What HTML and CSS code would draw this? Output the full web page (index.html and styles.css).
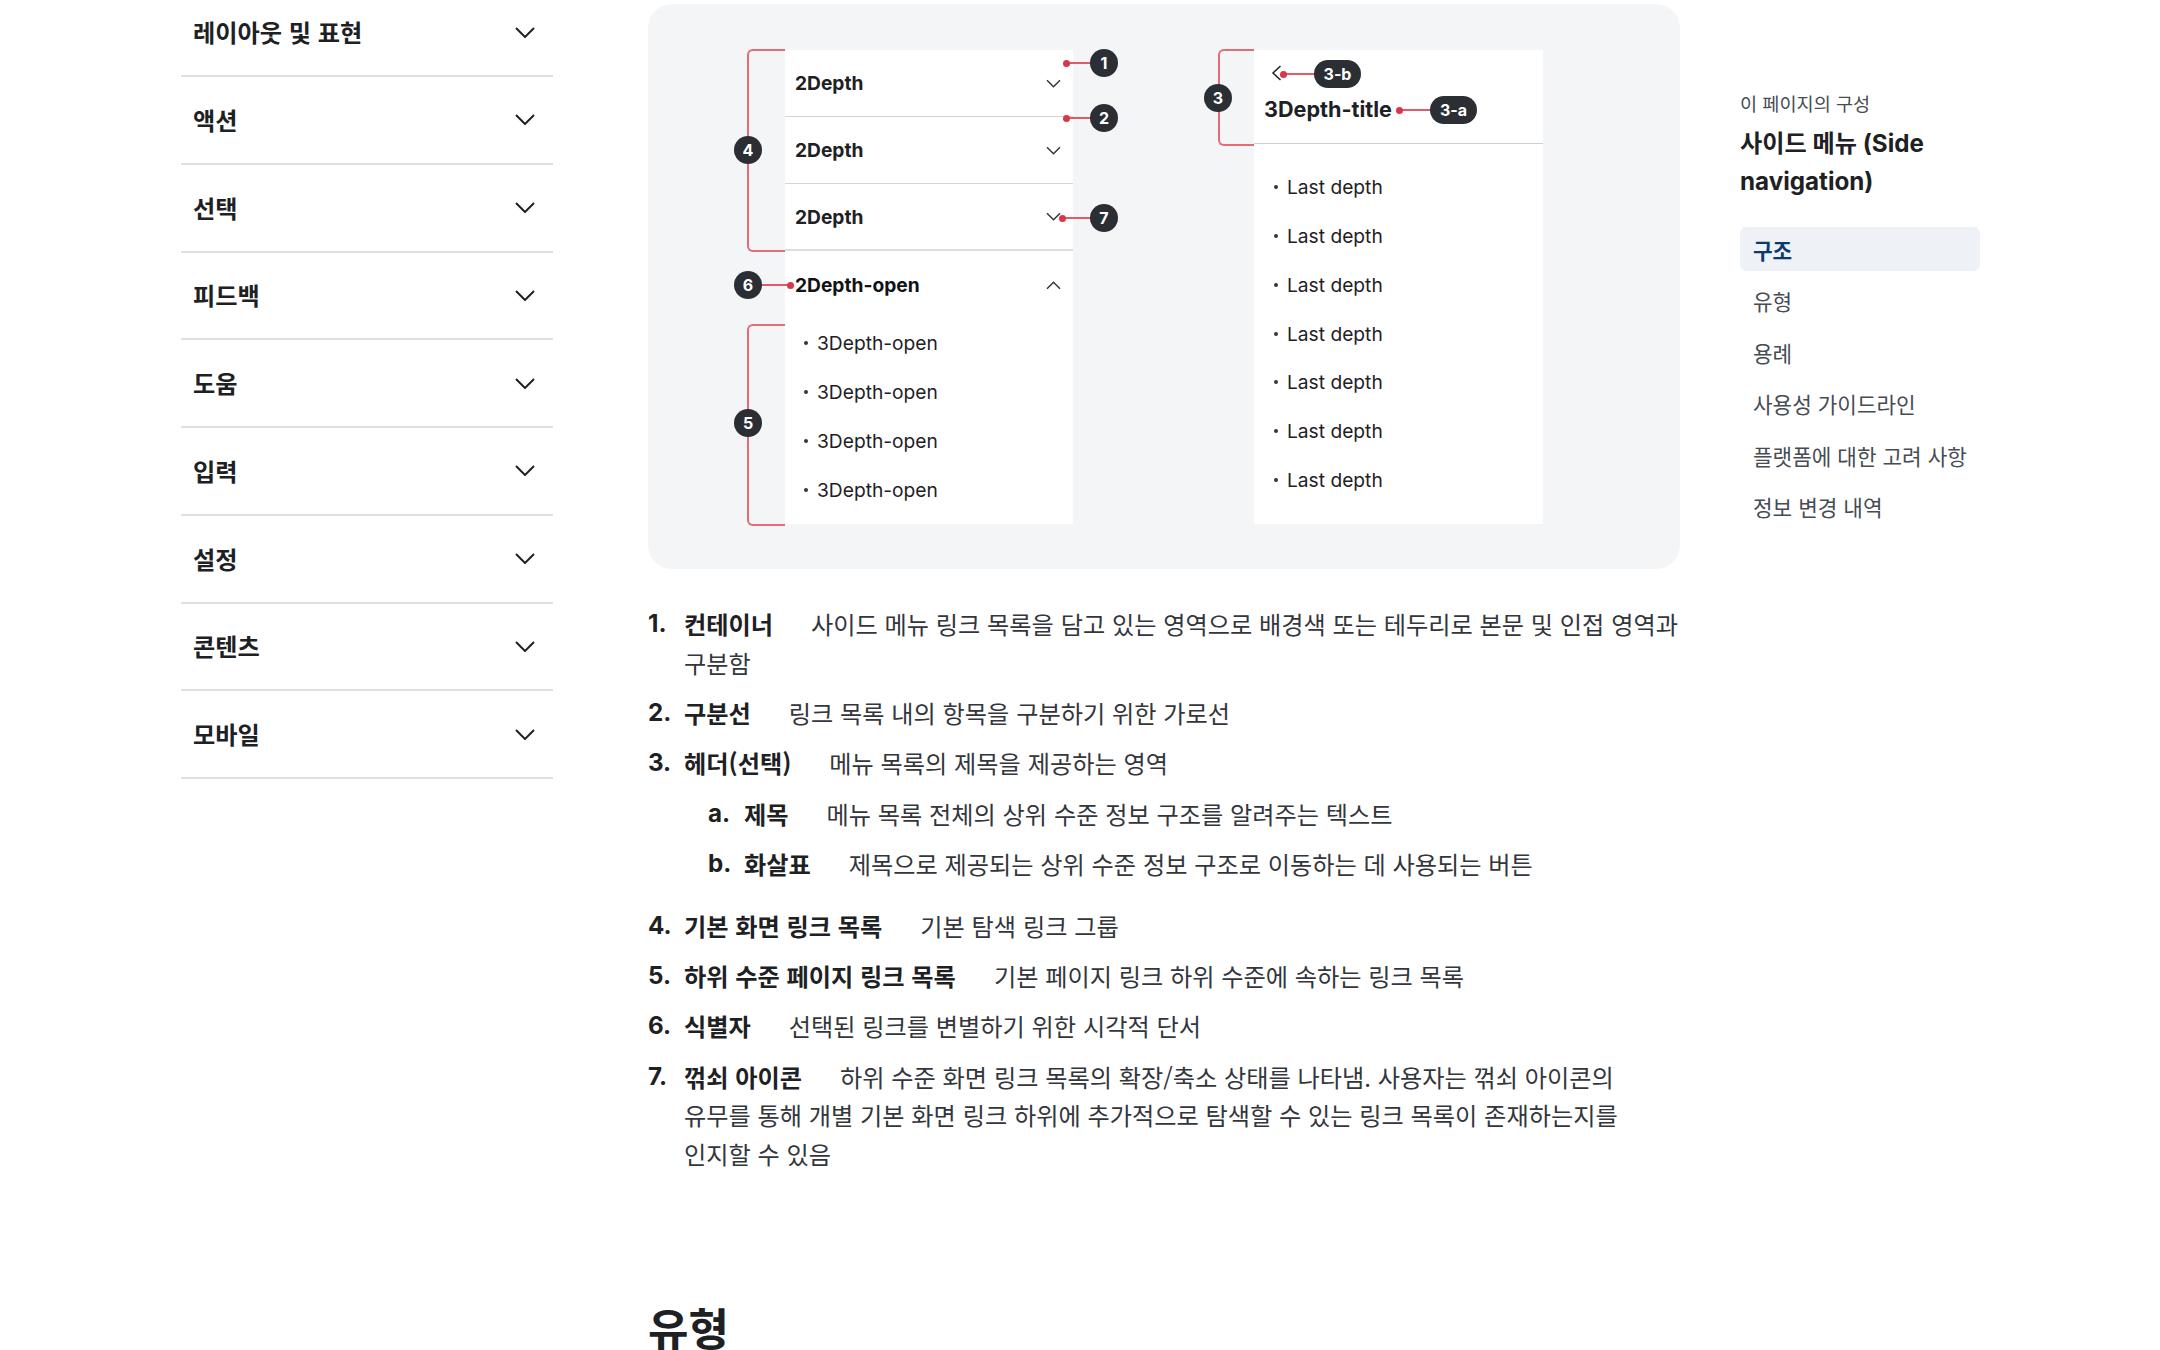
FILE: index.html
```html
<!DOCTYPE html>
<html lang="ko">
<head>
<meta charset="utf-8">
<title>사이드 메뉴 (Side navigation)</title>
<link rel="stylesheet" href="styles.css">
</head>
<body>
<div class="page">
  <nav class="sidenav">
    <ul class="nav-list">
      <li class="nav-item"><button class="nav-btn"><span>레이아웃 및 표현</span><svg class="nav-chev" width="20" height="11" viewBox="0 0 20 11"><path d="M1 1l9 9 9-9"/></svg></button></li>
      <li class="nav-item"><button class="nav-btn"><span>액션</span><svg class="nav-chev" width="20" height="11" viewBox="0 0 20 11"><path d="M1 1l9 9 9-9"/></svg></button></li>
      <li class="nav-item"><button class="nav-btn"><span>선택</span><svg class="nav-chev" width="20" height="11" viewBox="0 0 20 11"><path d="M1 1l9 9 9-9"/></svg></button></li>
      <li class="nav-item"><button class="nav-btn"><span>피드백</span><svg class="nav-chev" width="20" height="11" viewBox="0 0 20 11"><path d="M1 1l9 9 9-9"/></svg></button></li>
      <li class="nav-item"><button class="nav-btn"><span>도움</span><svg class="nav-chev" width="20" height="11" viewBox="0 0 20 11"><path d="M1 1l9 9 9-9"/></svg></button></li>
      <li class="nav-item"><button class="nav-btn"><span>입력</span><svg class="nav-chev" width="20" height="11" viewBox="0 0 20 11"><path d="M1 1l9 9 9-9"/></svg></button></li>
      <li class="nav-item"><button class="nav-btn"><span>설정</span><svg class="nav-chev" width="20" height="11" viewBox="0 0 20 11"><path d="M1 1l9 9 9-9"/></svg></button></li>
      <li class="nav-item"><button class="nav-btn"><span>콘텐츠</span><svg class="nav-chev" width="20" height="11" viewBox="0 0 20 11"><path d="M1 1l9 9 9-9"/></svg></button></li>
      <li class="nav-item"><button class="nav-btn"><span>모바일</span><svg class="nav-chev" width="20" height="11" viewBox="0 0 20 11"><path d="M1 1l9 9 9-9"/></svg></button></li>
    </ul>
  </nav>

  <main class="content">
    <figure class="diagram">
      <div class="demo demo-main">
        <div class="d-row"><span>2Depth</span><svg class="d-chev" width="15" height="9" viewBox="0 0 15 9"><path d="M1 1.2l6.5 6.5L14 1.2"/></svg></div>
        <div class="d-row"><span>2Depth</span><svg class="d-chev" width="15" height="9" viewBox="0 0 15 9"><path d="M1 1.2l6.5 6.5L14 1.2"/></svg></div>
        <div class="d-row d-row-last"><span>2Depth</span><svg class="d-chev" width="15" height="9" viewBox="0 0 15 9"><path d="M1 1.2l6.5 6.5L14 1.2"/></svg></div>
        <div class="d-row d-open"><span>2Depth-open</span><svg class="d-chev" width="15" height="9" viewBox="0 0 15 9"><path d="M1 7.8l6.5-6.5L14 7.8"/></svg></div>
        <ul class="d-sub">
          <li>3Depth-open</li>
          <li>3Depth-open</li>
          <li>3Depth-open</li>
          <li>3Depth-open</li>
        </ul>
      </div>
      <div class="demo demo-third">
        <div class="d-head">
          <svg class="d-back" width="11" height="16" viewBox="0 0 11 16"><path d="M9.5 1L2 8l7.5 7"/></svg>
          <p class="d-title">3Depth-title</p>
        </div>
        <ul class="d-sub d-last">
          <li>Last depth</li>
          <li>Last depth</li>
          <li>Last depth</li>
          <li>Last depth</li>
          <li>Last depth</li>
          <li>Last depth</li>
          <li>Last depth</li>
        </ul>
      </div>

      <span class="ann-bracket br4"></span>
      <span class="ann-bracket br5"></span>
      <span class="ann-bracket br3"></span>

      <span class="ann-lead ld1"></span>
      <span class="ann-lead ld2"></span>
      <span class="ann-lead ld7"></span>
      <span class="ann-lead ld6"></span>
      <span class="ann-lead ld3b"></span>
      <span class="ann-lead ld3a"></span>

      <span class="ann-dot dt1"></span>
      <span class="ann-dot dt2"></span>
      <span class="ann-dot dt7"></span>
      <span class="ann-dot dt6"></span>
      <span class="ann-dot dt3b"></span>
      <span class="ann-dot dt3a"></span>

      <span class="ann-badge bg1">1</span>
      <span class="ann-badge bg2">2</span>
      <span class="ann-badge bg7">7</span>
      <span class="ann-badge bg4">4</span>
      <span class="ann-badge bg6">6</span>
      <span class="ann-badge bg5">5</span>
      <span class="ann-badge bg3">3</span>
      <span class="ann-badge ann-pill pl3b">3-b</span>
      <span class="ann-badge ann-pill pl3a">3-a</span>
    </figure>

    <ol class="desc-list">
      <li><span class="num">1.</span><div class="item-body"><span class="term">컨테이너</span>사이드 메뉴 링크 목록을 담고 있는 영역으로 배경색 또는 테두리로 본문 및 인접 영역과<br>구분함</div></li>
      <li><span class="num">2.</span><div class="item-body"><span class="term">구분선</span>링크 목록 내의 항목을 구분하기 위한 가로선</div></li>
      <li><span class="num">3.</span><div class="item-body"><span class="term">헤더(선택)</span>메뉴 목록의 제목을 제공하는 영역
        <ol class="sub-list">
          <li><span class="num">a.</span><div class="item-body"><span class="term">제목</span>메뉴 목록 전체의 상위 수준 정보 구조를 알려주는 텍스트</div></li>
          <li><span class="num">b.</span><div class="item-body"><span class="term">화살표</span>제목으로 제공되는 상위 수준 정보 구조로 이동하는 데 사용되는 버튼</div></li>
        </ol></div></li>
      <li><span class="num">4.</span><div class="item-body"><span class="term">기본 화면 링크 목록</span>기본 탐색 링크 그룹</div></li>
      <li><span class="num">5.</span><div class="item-body"><span class="term">하위 수준 페이지 링크 목록</span>기본 페이지 링크 하위 수준에 속하는 링크 목록</div></li>
      <li><span class="num">6.</span><div class="item-body"><span class="term">식별자</span>선택된 링크를 변별하기 위한 시각적 단서</div></li>
      <li><span class="num">7.</span><div class="item-body"><span class="term">꺾쇠 아이콘</span>하위 수준 화면 링크 목록의 확장/축소 상태를 나타냄. 사용자는 꺾쇠 아이콘의<br>유무를 통해 개별 기본 화면 링크 하위에 추가적으로 탐색할 수 있는 링크 목록이 존재하는지를<br>인지할 수 있음</div></li>
    </ol>

    <h2 class="section-title">유형</h2>
  </main>

  <aside class="toc">
    <p class="toc-label">이 페이지의 구성</p>
    <p class="toc-title">사이드 메뉴 (Side navigation)</p>
    <ul class="toc-list">
      <li><a class="toc-link is-active" href="#structure">구조</a></li>
      <li><a class="toc-link" href="#type">유형</a></li>
      <li><a class="toc-link" href="#usage">용례</a></li>
      <li><a class="toc-link" href="#guide">사용성 가이드라인</a></li>
      <li><a class="toc-link" href="#platform">플랫폼에 대한 고려 사항</a></li>
      <li><a class="toc-link" href="#history">정보 변경 내역</a></li>
    </ul>
  </aside>
</div>
</body>
</html>
```

FILE: styles.css
```css
html, body {
  margin: 0;
  padding: 0;
  background: #ffffff;
  overflow: hidden;
}

body {
  font-family: "Noto Sans CJK KR", sans-serif;
  color: #1e2124;
}

.page {
  display: flex;
  align-items: flex-start;
  padding-left: 181px;
}

/* ---------- left side navigation ---------- */
.sidenav {
  flex: 0 0 372px;
  margin-top: -10.75px;
  margin-right: 95px;
}

.nav-list {
  list-style: none;
  margin: 0;
  padding: 0;
}

.nav-item {
  border-bottom: 2px solid #dcdfe3;
}

.nav-btn {
  display: flex;
  align-items: center;
  justify-content: space-between;
  width: 100%;
  height: 85.75px;
  padding: 0 18px 0 12px;
  border: 0;
  background: none;
  font-family: "Noto Sans CJK KR", sans-serif;
  font-weight: 700;
  font-size: 24.2px;
  line-height: 1.4;
  color: #1e2124;
  text-align: left;
  cursor: pointer;
}

.nav-chev path {
  fill: none;
  stroke: #1e2124;
  stroke-width: 2;
}

/* ---------- main content ---------- */
.content {
  flex: 0 0 1032px;
  margin-right: 60px;
  padding-top: 4px;
}

.diagram {
  position: relative;
  margin: 0;
  height: 565px;
  box-sizing: border-box;
  padding: 46px 137px 0;
  display: flex;
  gap: 181px;
  align-items: flex-start;
  background: #f4f5f6;
  border-radius: 24px;
  font-family: Inter, "Noto Sans CJK KR", sans-serif;
}

.demo {
  background: #ffffff;
  height: 474px;
  box-sizing: border-box;
}

.demo-main { width: 288px; }
.demo-third { width: 289px; }

.d-row {
  display: flex;
  align-items: center;
  justify-content: space-between;
  height: 67px;
  box-sizing: border-box;
  border-bottom: 1px solid #d3d6da;
  padding: 0 12.5px 0 10px;
  font-weight: 700;
  font-size: 19.2px;
  color: #1e2124;
}

.d-row-last {
  border-bottom: 2px solid #dcdfe2;
}

.d-open {
  height: 68px;
  border-bottom: 0;
  color: #111315;
}

.d-chev path,
.d-back path {
  fill: none;
  stroke: #33363d;
  stroke-width: 1.5;
}

.d-sub {
  list-style: none;
  margin: 0;
  padding: 0 0 10px;
}

.d-sub li {
  display: flex;
  align-items: center;
  height: 48.75px;
  font-size: 19.2px;
  color: #1e2124;
}

.d-sub li::before {
  content: "";
  flex: 0 0 4px;
  height: 4px;
  border-radius: 50%;
  background: #33363d;
  margin: 0 9px 0 19px;
}

.d-head {
  height: 94px;
  box-sizing: border-box;
  border-bottom: 1px solid #cdd1d5;
  padding: 15px 10px 0;
}

.d-back {
  display: block;
  margin-left: 7px;
}

.d-back path {
  stroke: #1e2124;
}

.d-title {
  margin: 13px 0 0;
  font-weight: 700;
  font-size: 21.6px;
  line-height: 30px;
  color: #1e2124;
}

.d-last {
  padding: 19px 0 0;
}

.d-last li::before {
  margin-left: 20px;
}

/* annotations on the diagram canvas */
.ann-bracket {
  position: absolute;
  left: 99px;
  width: 38px;
  box-sizing: border-box;
  border: 2px solid #e46b78;
  border-right: 0;
  border-radius: 6px 0 0 6px;
}

.br4 { top: 45px; height: 203px; }
.br5 { top: 320px; height: 202px; }
.br3 { left: 570px; width: 36px; top: 45px; height: 97px; }

.ann-lead {
  position: absolute;
  height: 2px;
  background: #e25a69;
}

.ld1 { left: 418px; top: 58px; width: 26px; }
.ld2 { left: 418px; top: 113px; width: 26px; }
.ld7 { left: 414px; top: 213px; width: 30px; }
.ld6 { left: 112px; top: 280px; width: 30px; }
.ld3b { left: 635px; top: 69px; width: 33px; }
.ld3a { left: 751px; top: 105px; width: 33px; }

.ann-dot {
  position: absolute;
  width: 7px;
  height: 7px;
  border-radius: 50%;
  background: #d9364a;
}

.dt1 { left: 414.5px; top: 55.5px; }
.dt2 { left: 414.5px; top: 110.5px; }
.dt7 { left: 410.5px; top: 210.5px; }
.dt6 { left: 138.5px; top: 277.5px; }
.dt3b { left: 631.5px; top: 66.5px; }
.dt3a { left: 747.5px; top: 102.5px; }

.ann-badge {
  position: absolute;
  width: 28px;
  height: 28px;
  box-sizing: border-box;
  border-radius: 14px;
  background: #2b2f34;
  color: #ffffff;
  font-family: Inter, sans-serif;
  font-weight: 700;
  font-size: 16px;
  line-height: 28px;
  text-align: center;
}

.ann-pill {
  width: 47px;
}

.bg1 { left: 442px; top: 45px; }
.bg2 { left: 442px; top: 100px; }
.bg7 { left: 442px; top: 200px; }
.bg4 { left: 86px; top: 132px; }
.bg6 { left: 86px; top: 267px; }
.bg5 { left: 86px; top: 405px; }
.bg3 { left: 556px; top: 80px; }
.pl3b { left: 666px; top: 56px; }
.pl3a { left: 782px; top: 92px; }

/* description list */
.desc-list {
  list-style: none;
  margin: 36px -40px 0 0;
  padding: 0;
  font-size: 24.2px;
  line-height: 38.8px;
  color: #33363d;
}

.desc-list li {
  display: flex;
  margin-bottom: 11.5px;
}

.num {
  flex: 0 0 36px;
  font-family: Inter, "Noto Sans CJK KR", sans-serif;
  font-weight: 700;
  color: #1e2124;
}

.item-body {
  flex: 1;
  min-width: 0;
}

.term {
  font-weight: 700;
  color: #1e2124;
  margin-right: 38px;
}

.sub-list {
  list-style: none;
  margin: 11.5px 0 2px 24px;
  padding: 0;
}

.sub-list .num {
  flex-basis: 36px;
}

.section-title {
  margin: 123px 0 0;
  font-size: 44px;
  line-height: 60px;
  font-weight: 700;
  color: #1e2124;
}

/* ---------- right table of contents ---------- */
.toc {
  flex: 0 0 240px;
  padding-top: 90px;
}

.toc-label {
  margin: 0;
  font-size: 18.6px;
  line-height: 26px;
  color: #464c53;
}

.toc-title {
  margin: 9px 0 0;
  font-family: Inter, "Noto Sans CJK KR", sans-serif;
  font-weight: 700;
  font-size: 24.2px;
  line-height: 38px;
  color: #1e2124;
}

.toc-list {
  list-style: none;
  margin: 26px 0 0;
  padding: 0;
  display: flex;
  flex-direction: column;
  gap: 7.6px;
}

.toc-link {
  display: flex;
  align-items: center;
  height: 44px;
  padding-left: 13px;
  border-radius: 6px;
  font-size: 21.3px;
  color: #464c53;
  text-decoration: none;
}

.toc-link.is-active {
  background: #eef2f7;
  color: #0b3a6e;
  font-weight: 700;
}
```
